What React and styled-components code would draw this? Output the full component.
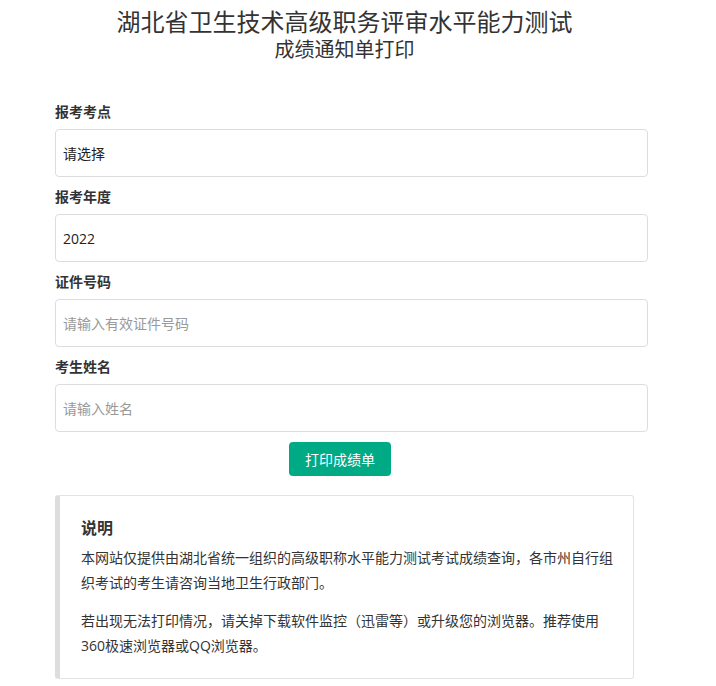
import React from 'react'
import styled, { createGlobalStyle } from 'styled-components'

const GlobalStyle = createGlobalStyle`
  * {
    margin: 0;
    padding: 0;
    box-sizing: border-box;
  }
  body {
    background-color: #fff;
    font-family: "Open Sans", "Noto Sans CJK SC", sans-serif;
    color: #333;
  }
`

const Page = styled.div`
  width: 579px;
  margin-left: 55px;
  padding-top: 6px;
`

const Header = styled.header`
  text-align: center;
  color: #333;
  margin-bottom: 40px;
`

const Title = styled.h1`
  font-size: 24px;
  font-weight: normal;
  line-height: 32px;
`

const SubTitle = styled.h2`
  font-size: 20px;
  font-weight: normal;
  line-height: 24px;
`

const Form = styled.form`
  display: flex;
  flex-direction: column;
`

const Field = styled.div`
  display: flex;
  flex-direction: column;
  margin-bottom: 10px;
`

const Label = styled.label`
  font-size: 14px;
  font-weight: bold;
  line-height: 20px;
  margin-bottom: 7px;
  color: #333;
`

const Input = styled.input`
  width: calc(100% + 14px);
  height: 48px;
  border: 1px solid #ddd;
  border-radius: 4px;
  padding: 0 7px;
  font-family: "Open Sans", "Noto Sans CJK SC", sans-serif;
  font-size: 14px;
  color: #222;
  outline: none;
  &::placeholder {
    color: #999;
  }
`

const Select = styled.div`
  width: calc(100% + 14px);
  height: 48px;
  border: 1px solid #ddd;
  border-radius: 4px;
  padding: 0 7px;
  display: flex;
  align-items: center;
  font-size: 14px;
  color: #222;
`

const Actions = styled.div`
  display: flex;
  justify-content: center;
  padding-right: 9px;
`

const Button = styled.button`
  background-color: #00aa85;
  border: none;
  border-radius: 4px;
  height: 34px;
  padding: 0 16px;
  font-family: "Open Sans", "Noto Sans CJK SC", sans-serif;
  font-size: 14px;
  color: #fff;
  cursor: pointer;
`

const Notice = styled.div`
  margin-top: 19px;
  border: 1px solid #e3e3e3;
  border-left: 5px solid #ddd;
  border-radius: 3px;
  padding: 20px 14px 20px 21px;
`

const NoticeTitle = styled.h3`
  font-size: 16px;
  font-weight: bold;
  line-height: 24px;
  margin-bottom: 5px;
`

const Para = styled.p`
  font-size: 14px;
  line-height: 25px;
  color: #333;
  & + & {
    margin-top: 13px;
  }
`

export default function App() {
  return (
    <Page>
      <GlobalStyle />
      <Header>
        <Title>湖北省卫生技术高级职务评审水平能力测试</Title>
        <SubTitle>成绩通知单打印</SubTitle>
      </Header>
      <Form onSubmit={e => e.preventDefault()}>
        <Field>
          <Label>报考考点</Label>
          <Select>请选择</Select>
        </Field>
        <Field>
          <Label>报考年度</Label>
          <Input defaultValue="2022" />
        </Field>
        <Field>
          <Label>证件号码</Label>
          <Input placeholder="请输入有效证件号码" />
        </Field>
        <Field>
          <Label>考生姓名</Label>
          <Input placeholder="请输入姓名" />
        </Field>
        <Actions>
          <Button type="submit">打印成绩单</Button>
        </Actions>
      </Form>
      <Notice>
        <NoticeTitle>说明</NoticeTitle>
        <Para>本网站仅提供由湖北省统一组织的高级职称水平能力测试考试成绩查询，各市州自行组织考试的考生请咨询当地卫生行政部门。</Para>
        <Para>若出现无法打印情况，请关掉下载软件监控（迅雷等）或升级您的浏览器。推荐使用360极速浏览器或QQ浏览器。</Para>
      </Notice>
    </Page>
  )
}
